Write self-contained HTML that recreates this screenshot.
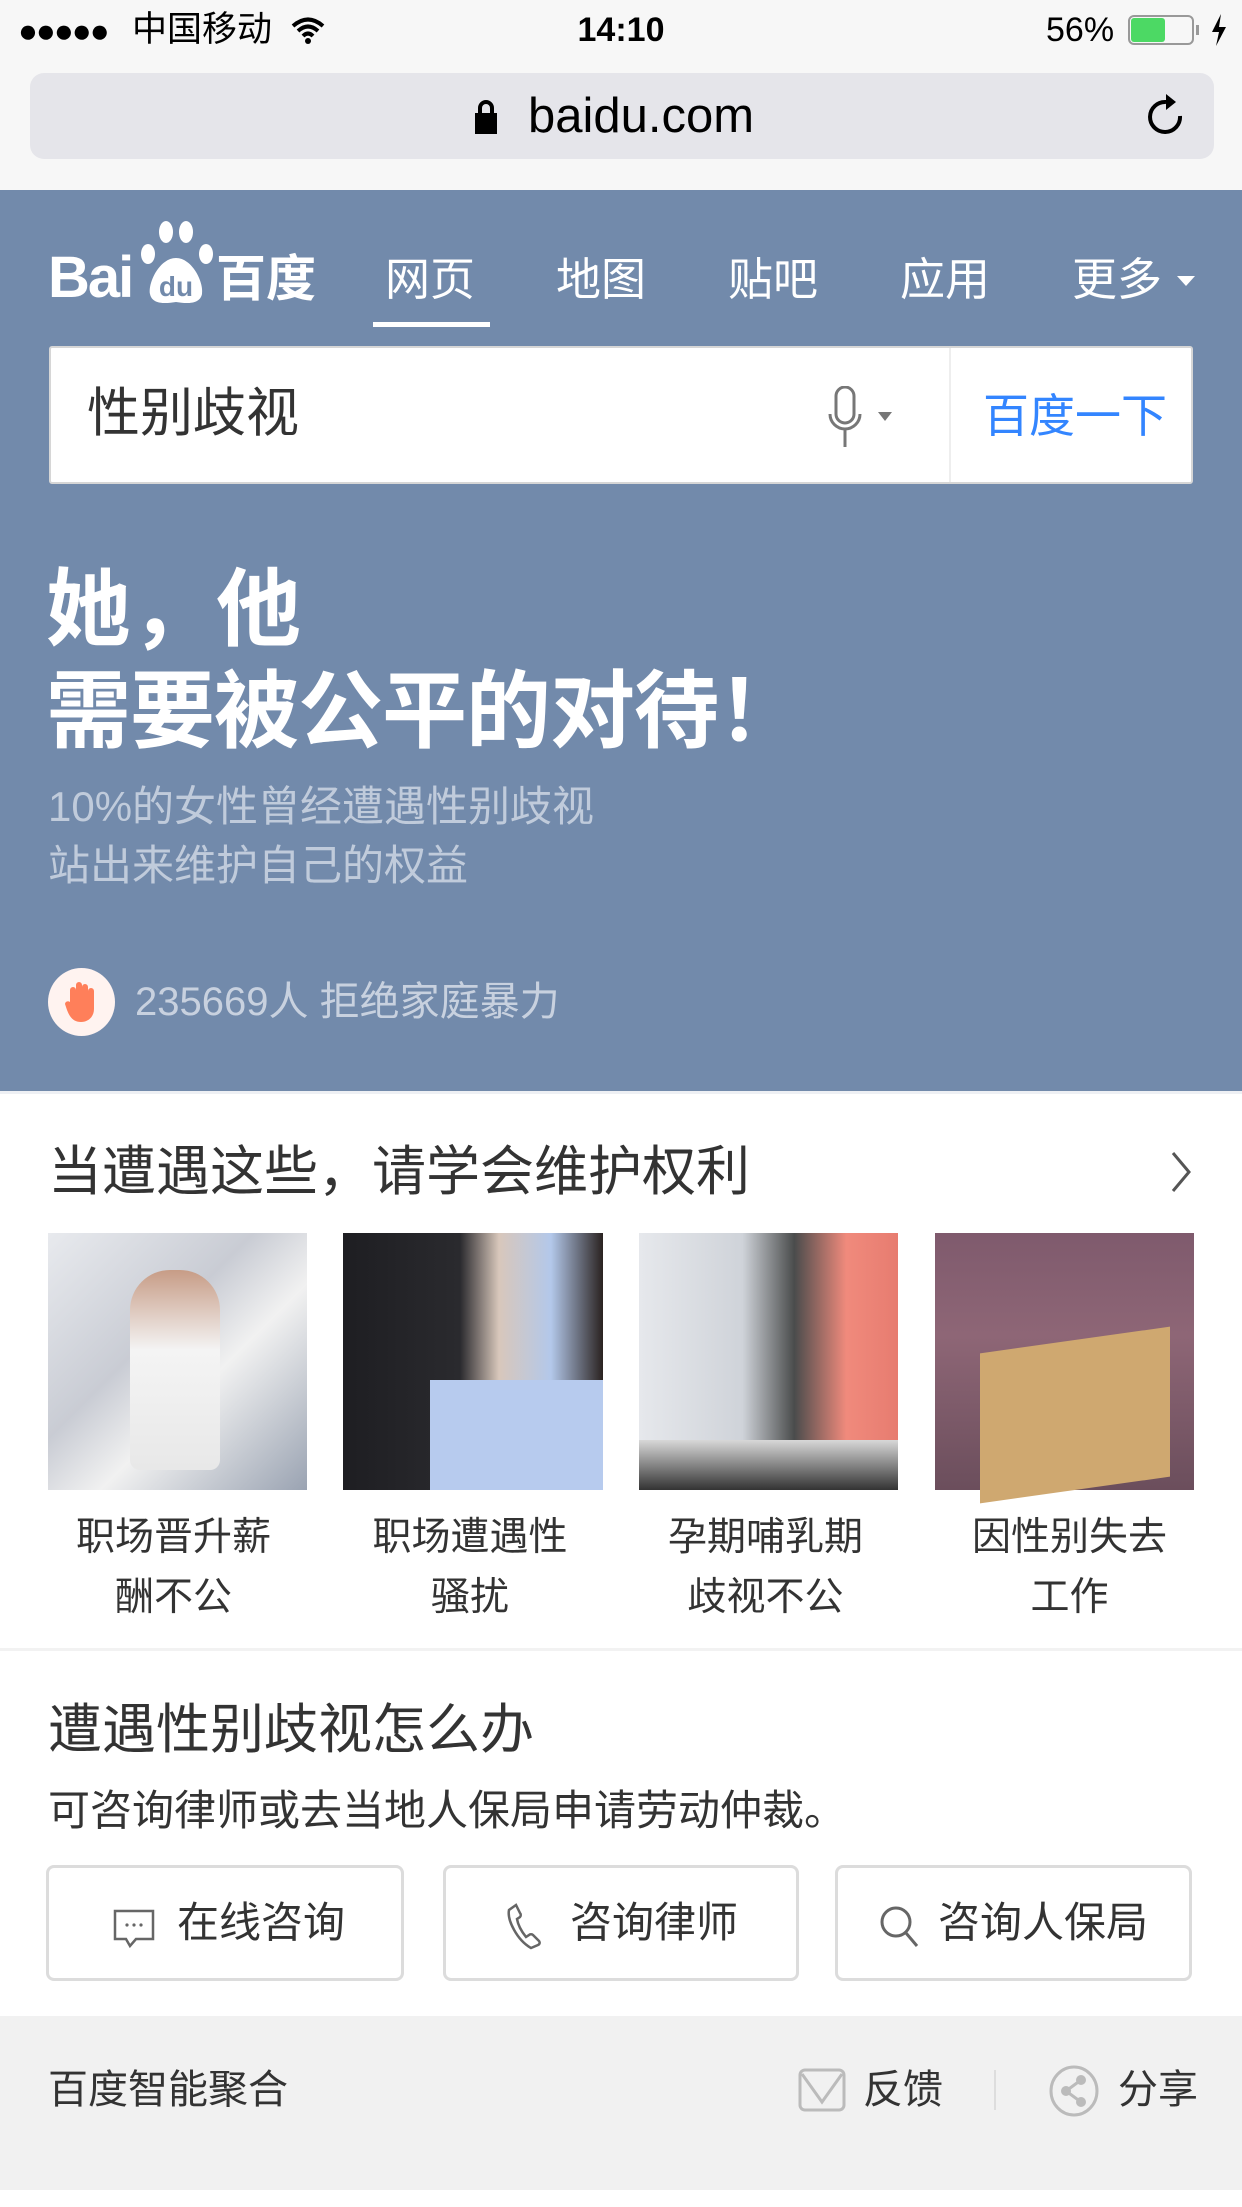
<!DOCTYPE html>
<html><head><meta charset="utf-8">
<style>
*{margin:0;padding:0;box-sizing:border-box}
body{width:1242px;height:2207px;position:relative;background:#fff;font-family:"Liberation Sans","Noto Sans CJK SC",sans-serif;overflow:hidden}
.a{position:absolute;white-space:nowrap}
.cn{font-family:"Liberation Sans","Noto Sans CJK SC",sans-serif}
</style></head><body>
<div class="a" style="left:0;top:0;width:1242px;height:190px;background:#f7f7f7"></div>
<div class="a" style="left:18px;top:14px;font-size:33px;line-height:34px;color:#000;letter-spacing:-2px">●●●●●</div>
<div class="a" style="left:132px;top:9px;font-size:35px;line-height:42px;color:#000">中国移动</div>
<svg class="a" style="left:290px;top:16px" width="36" height="28" viewBox="0 0 36 28"><path d="M3 10Q18-3 33 10M8 15Q18 6 28 15M13 20Q18 15 23 20" stroke="#000" stroke-width="4" fill="none"/><circle cx="18" cy="25" r="3" fill="#000"/></svg>
<div class="a" style="left:0;width:1242px;text-align:center;top:10px;font-size:34px;line-height:40px;font-weight:bold;color:#000">14:10</div>
<div class="a" style="left:1046px;top:10px;font-size:34px;line-height:40px;color:#000">56%</div>
<div class="a" style="left:1128px;top:15px;width:66px;height:30px;border:2px solid #999;border-radius:6px"></div>
<div class="a" style="left:1131px;top:18px;width:34px;height:24px;background:#4cd964;border-radius:3px"></div>
<div class="a" style="left:1196px;top:25px;width:3px;height:10px;background:#999"></div>
<svg class="a" style="left:1210px;top:14px" width="18" height="32" viewBox="0 0 18 32"><path d="M11 0L2 18h7l-3 14 10-19H9z" fill="#000"/></svg>
<div class="a" style="left:30px;top:73px;width:1184px;height:86px;background:#e5e5ea;border-radius:14px"></div>
<svg class="a" style="left:474px;top:100px" width="24" height="34" viewBox="0 0 24 34"><rect x="1" y="13" width="22" height="21" fill="#000"/><path d="M6 14V8a6 6 0 0112 0v6" stroke="#000" stroke-width="4" fill="none"/></svg>
<div class="a" style="left:528px;top:88px;font-size:49px;line-height:56px;color:#000">baidu.com</div>
<svg class="a" style="left:1146px;top:92px" width="40" height="48" viewBox="0 0 40 48"><path d="M20 10A15 15 0 1 0 34 24" stroke="#000" stroke-width="4" fill="none"/><path d="M20 2l10 8-10 8z" fill="#000"/></svg>

<div class="a" style="left:0;top:190px;width:1242px;height:901px;background:#728aab"></div>
<div class="a" style="left:48px;top:248px;font-size:58px;line-height:60px;font-weight:bold;color:#fff;letter-spacing:-2px">Bai</div>
<svg class="a" style="left:136px;top:218px" width="82" height="88" viewBox="0 0 82 88"><ellipse cx="30" cy="14" rx="7" ry="11" fill="#fff"/><ellipse cx="50" cy="14" rx="7" ry="11" fill="#fff"/><ellipse cx="12" cy="36" rx="7" ry="10" fill="#fff"/><ellipse cx="70" cy="36" rx="7" ry="10" fill="#fff"/><path d="M40 40C24 40 12 64 14 76c2 10 14 10 26 8 12 2 24 2 26-8 2-12-10-36-26-36z" fill="#fff"/><text x="40" y="78" font-size="28" font-weight="bold" fill="#728aab" text-anchor="middle" font-family="Liberation Sans">du</text></svg>
<div class="a" style="left:216px;top:250px;font-size:50px;line-height:58px;font-weight:bold;color:#fff">百度</div>
<div class="a" style="left:385px;top:252px;font-size:45px;line-height:56px;color:#fff">网页</div>
<div class="a" style="left:373px;top:322px;width:117px;height:5px;background:#fff"></div>
<div class="a" style="left:556px;top:252px;font-size:45px;line-height:56px;color:#fff">地图</div>
<div class="a" style="left:728px;top:252px;font-size:45px;line-height:56px;color:#fff">贴吧</div>
<div class="a" style="left:900px;top:252px;font-size:45px;line-height:56px;color:#fff">应用</div>
<div class="a" style="left:1072px;top:252px;font-size:45px;line-height:56px;color:#fff">更多</div>
<div class="a" style="left:1177px;top:276px;border-left:9px solid transparent;border-right:9px solid transparent;border-top:10px solid #fff"></div>
<div class="a" style="left:49px;top:346px;width:1144px;height:138px;background:#fff;border:2px solid #d6d6d6;border-radius:3px"></div>
<div class="a" style="left:949px;top:348px;width:2px;height:134px;background:#eee"></div>
<div class="a" style="left:87px;top:384px;font-size:53px;line-height:60px;color:#333">性别歧视</div>
<svg class="a" style="left:828px;top:386px" width="66" height="62" viewBox="0 0 66 62"><rect x="8" y="1" width="18" height="36" rx="9" fill="none" stroke="#777" stroke-width="3"/><path d="M2 28a15 15 0 0030 0M17 43v18" stroke="#777" stroke-width="3" fill="none"/><path d="M50 26h14l-7 9z" fill="#777"/></svg>
<div class="a" style="left:983px;top:387px;font-size:46px;line-height:58px;color:#3385ff">百度一下</div>
<div class="a" style="left:46px;top:564px;font-size:85px;line-height:94px;font-weight:bold;color:#fff">她，他</div>
<div class="a" style="left:46px;top:666px;font-size:85px;line-height:94px;font-weight:bold;color:#fff;letter-spacing:-1px">需要被公平的对待！</div>
<div class="a" style="left:48px;top:782px;font-size:42px;line-height:50px;color:#c0cbdb">10%的女性曾经遭遇性别歧视</div>
<div class="a" style="left:48px;top:841px;font-size:42px;line-height:50px;color:#c0cbdb">站出来维护自己的权益</div>
<div class="a" style="left:48px;top:968px;width:67px;height:68px;border-radius:50%;background:#fff3f0"></div>
<svg class="a" style="left:64px;top:980px" width="34" height="42" viewBox="0 0 34 42"><path d="M6 24V10a3 3 0 016 0v8V5a3 3 0 016 0v13V7a3 3 0 016 0v12-8a3 3 0 016 0v18c0 8-6 13-13 13S6 38 3 30l-2-6a3 3 0 015-2z" fill="#ff7f5a"/></svg>
<div class="a" style="left:135px;top:978px;font-size:40px;line-height:48px;color:#c8d1df">235669人 拒绝家庭暴力</div>

<div class="a" style="left:0;top:1091px;width:1242px;height:3px;background:#eef0f4"></div>
<div class="a" style="left:48px;top:1141px;font-size:54px;line-height:62px;color:#333">当遭遇这些，请学会维护权利</div>
<svg class="a" style="left:1170px;top:1150px" width="22" height="44" viewBox="0 0 22 44"><path d="M3 3l16 19L3 41" stroke="#555" stroke-width="3" fill="none"/></svg>
<div class="a" style="left:48px;top:1233px;width:259px;height:257px;background:linear-gradient(135deg,#e8eaee 0%,#c9ccd4 40%,#f1f1f1 60%,#9aa3b2 100%)"></div>
<div class="a" style="left:130px;top:1270px;width:90px;height:200px;background:linear-gradient(#c79c86,#f4f4f4 40%,#e8e8e8);border-radius:40px 40px 10px 10px"></div>
<div class="a" style="left:343px;top:1233px;width:260px;height:257px;background:linear-gradient(90deg,#1e1e22 0%,#2a2a2e 45%,#d8c7bb 60%,#b3c8ea 80%,#2a2220 100%)"></div>
<div class="a" style="left:430px;top:1380px;width:173px;height:110px;background:#b7cbee"></div>
<div class="a" style="left:639px;top:1233px;width:259px;height:257px;background:linear-gradient(90deg,#e6e8ec 0%,#cfd3d9 40%,#4a4c4c 60%,#f08a7c 80%,#e77c70 100%)"></div>
<div class="a" style="left:639px;top:1440px;width:259px;height:50px;background:linear-gradient(#d8d8d8,#333)"></div>
<div class="a" style="left:935px;top:1233px;width:259px;height:257px;background:linear-gradient(#7f5a6d 0%,#8e6676 40%,#6b4e5c 100%)"></div>
<div class="a" style="left:980px;top:1340px;width:190px;height:150px;background:#cfa870;transform:skewY(-8deg)"></div>
<div class="cn a" style="left:44px;top:1508px;width:259px;text-align:center;font-size:39px;line-height:60px;color:#333">职场晋升薪<br>酬不公</div>
<div class="cn a" style="left:340px;top:1508px;width:260px;text-align:center;font-size:39px;line-height:60px;color:#333">职场遭遇性<br>骚扰</div>
<div class="cn a" style="left:636px;top:1508px;width:259px;text-align:center;font-size:39px;line-height:60px;color:#333">孕期哺乳期<br>歧视不公</div>
<div class="cn a" style="left:940px;top:1508px;width:259px;text-align:center;font-size:39px;line-height:60px;color:#333">因性别失去<br>工作</div>
<div class="a" style="left:0;top:1648px;width:1242px;height:3px;background:#f2f2f2"></div>

<div class="a" style="left:48px;top:1699px;font-size:54px;line-height:62px;color:#333">遭遇性别歧视怎么办</div>
<div class="a" style="left:48px;top:1786px;font-size:42px;line-height:50px;color:#333">可咨询律师或去当地人保局申请劳动仲裁。</div>
<div class="a" style="left:46px;top:1865px;width:358px;height:116px;border:3px solid #dcdcdc;border-radius:8px"></div>
<div class="a" style="left:443px;top:1865px;width:356px;height:116px;border:3px solid #dcdcdc;border-radius:8px"></div>
<div class="a" style="left:835px;top:1865px;width:357px;height:116px;border:3px solid #dcdcdc;border-radius:8px"></div>
<svg class="a" style="left:112px;top:1908px" width="44" height="44" viewBox="0 0 44 44"><path d="M3 3h38v28H24l-6 7-4-7H3z" stroke="#666" stroke-width="2.5" fill="none"/><circle cx="15" cy="17" r="1.6" fill="#666"/><circle cx="22" cy="17" r="1.6" fill="#666"/><circle cx="29" cy="17" r="1.6" fill="#666"/></svg>
<div class="a" style="left:177px;top:1897px;font-size:42px;line-height:52px;color:#333">在线咨询</div>
<svg class="a" style="left:506px;top:1902px" width="44" height="50" viewBox="0 0 44 50"><path d="M10 3l-7 5c-2 10 8 30 22 38l7-3c2-1 2-3 1-4l-6-6c-1-1-3-1-4 0l-3 2C16 30 12 23 11 17l3-2c1-1 1-3 0-4z" stroke="#666" stroke-width="2.5" fill="none"/></svg>
<div class="a" style="left:570px;top:1897px;font-size:42px;line-height:52px;color:#333">咨询律师</div>
<svg class="a" style="left:878px;top:1904px" width="44" height="46" viewBox="0 0 44 46"><circle cx="18" cy="18" r="14" stroke="#666" stroke-width="3" fill="none"/><path d="M28 29l11 13" stroke="#666" stroke-width="3"/></svg>
<div class="a" style="left:938px;top:1897px;font-size:42px;line-height:52px;color:#333">咨询人保局</div>

<div class="a" style="left:0;top:2016px;width:1242px;height:174px;background:#f1f1f1"></div>
<div class="a" style="left:48px;top:2066px;font-size:40px;line-height:48px;color:#333">百度智能聚合</div>
<svg class="a" style="left:798px;top:2068px" width="48" height="44" viewBox="0 0 48 44"><rect x="2" y="2" width="44" height="40" rx="5" stroke="#bbb" stroke-width="3" fill="none"/><path d="M4 6l20 28L44 6" stroke="#bbb" stroke-width="3" fill="none"/></svg>
<div class="a" style="left:863px;top:2066px;font-size:40px;line-height:48px;color:#333">反馈</div>
<div class="a" style="left:994px;top:2070px;width:2px;height:40px;background:#ddd"></div>
<svg class="a" style="left:1048px;top:2064px" width="52" height="54" viewBox="0 0 52 54"><ellipse cx="26" cy="27" rx="23" ry="24" stroke="#bbb" stroke-width="3" fill="none"/><circle cx="33" cy="16" r="5" fill="#bbb"/><circle cx="18" cy="27" r="5" fill="#bbb"/><circle cx="33" cy="38" r="5" fill="#bbb"/><path d="M33 16L18 27l15 11" stroke="#bbb" stroke-width="3" fill="none"/></svg>
<div class="a" style="left:1118px;top:2066px;font-size:40px;line-height:48px;color:#333">分享</div>
</body></html>
